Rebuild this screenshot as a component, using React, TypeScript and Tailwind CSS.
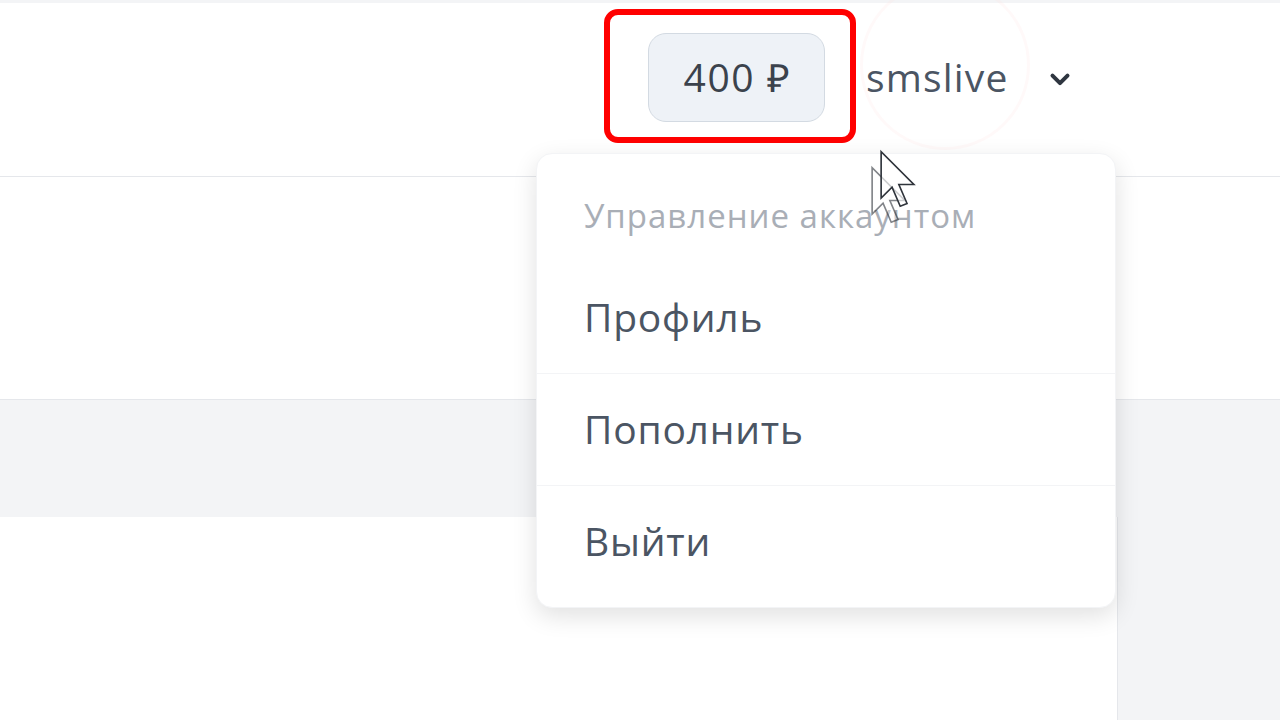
import React from 'react';

const menuItems = ['Профиль', 'Пополнить', 'Выйти'];

const Cursor: React.FC<{ className: string }> = ({ className }) => (
  <svg className={className} viewBox="0 0 14 22" fill="none" xmlns="http://www.w3.org/2000/svg">
    <path
      d="M1 1 L1 18 L5 14 L8 21 L10.5 20 L7.5 13 L13 13 Z"
      fill="white"
      fillOpacity="0.6"
      stroke="#2f343b"
      strokeWidth="0.6"
      strokeLinejoin="miter"
    />
  </svg>
);

const App: React.FC = () => {
  return (
    <div className="relative h-[720px] w-[1280px] overflow-hidden bg-white font-['Open_Sans',sans-serif]">
      <div className="h-[3px] bg-gray-100" />

      {/* header */}
      <header className="flex h-[174px] items-start border-b border-gray-200 pl-[648px] pt-[30px]">
        <div className="flex h-[89px] w-[177px] items-center justify-center rounded-[18px] border border-[#d3dae2] bg-[#eef2f7] pl-[2px] text-[39px] tracking-[0.04em] text-[#3b424c]">
          400 ₽
        </div>
        <div className="flex h-[89px] items-center">
          <span className="ml-[41px] text-[39px] tracking-[0.03em] text-[#4b5563]">smslive</span>
          <svg className="ml-[31px] mt-[2px] h-[40px] w-[40px]" viewBox="0 0 24 24" fill="none" stroke="#2f3640" strokeWidth="2.4" strokeLinecap="round" strokeLinejoin="round">
            <path d="M7.5 10l4.5 4.5 4.5-4.5" />
          </svg>
        </div>
      </header>

      {/* page body */}
      <div className="h-[223px] border-b border-gray-200 bg-white" />
      <div className="h-[117px] bg-[#f3f4f6]" />
      <div className="flex h-[203px]">
        <div className="w-[1118px] border-r border-gray-200 bg-white" />
        <div className="flex-1 bg-[#f3f4f6]" />
      </div>

      {/* click highlight ring */}
      <div className="pointer-events-none absolute left-[860px] top-[-20px] h-[170px] w-[170px] rounded-full border-[3px] border-red-100/20" />

      {/* annotation box */}
      <div className="pointer-events-none absolute left-[604px] top-[9px] h-[134px] w-[252px] rounded-[14px] border-[6px] border-[#ff0000]" />

      {/* dropdown */}
      <div className="absolute left-[536px] top-[153px] w-[580px] rounded-2xl border border-gray-100 bg-white pb-[10px] shadow-[0_8px_24px_rgba(0,0,0,0.12)]">
        <div className="flex h-[107px] items-center pl-[47px] pt-[16px] text-[33px] font-medium tracking-[0.03em] text-[#a9aeb6]">
          Управление аккаунтом
        </div>
        {menuItems.map((item, i) => (
          <div
            key={item}
            className={`flex h-[112px] items-center pl-[47px] text-[39px] tracking-[0.02em] text-[#4b5563] ${i > 0 ? 'border-t border-gray-100' : ''}`}
          >
            {item}
          </div>
        ))}
      </div>

      {/* mouse pointer, with its motion ghost */}
      <Cursor className="pointer-events-none absolute left-[869px] top-[165px] h-[60px] w-[39px] opacity-60" />
      <Cursor className="pointer-events-none absolute left-[878px] top-[149px] h-[60px] w-[39px]" />
    </div>
  );
};

export default App;
